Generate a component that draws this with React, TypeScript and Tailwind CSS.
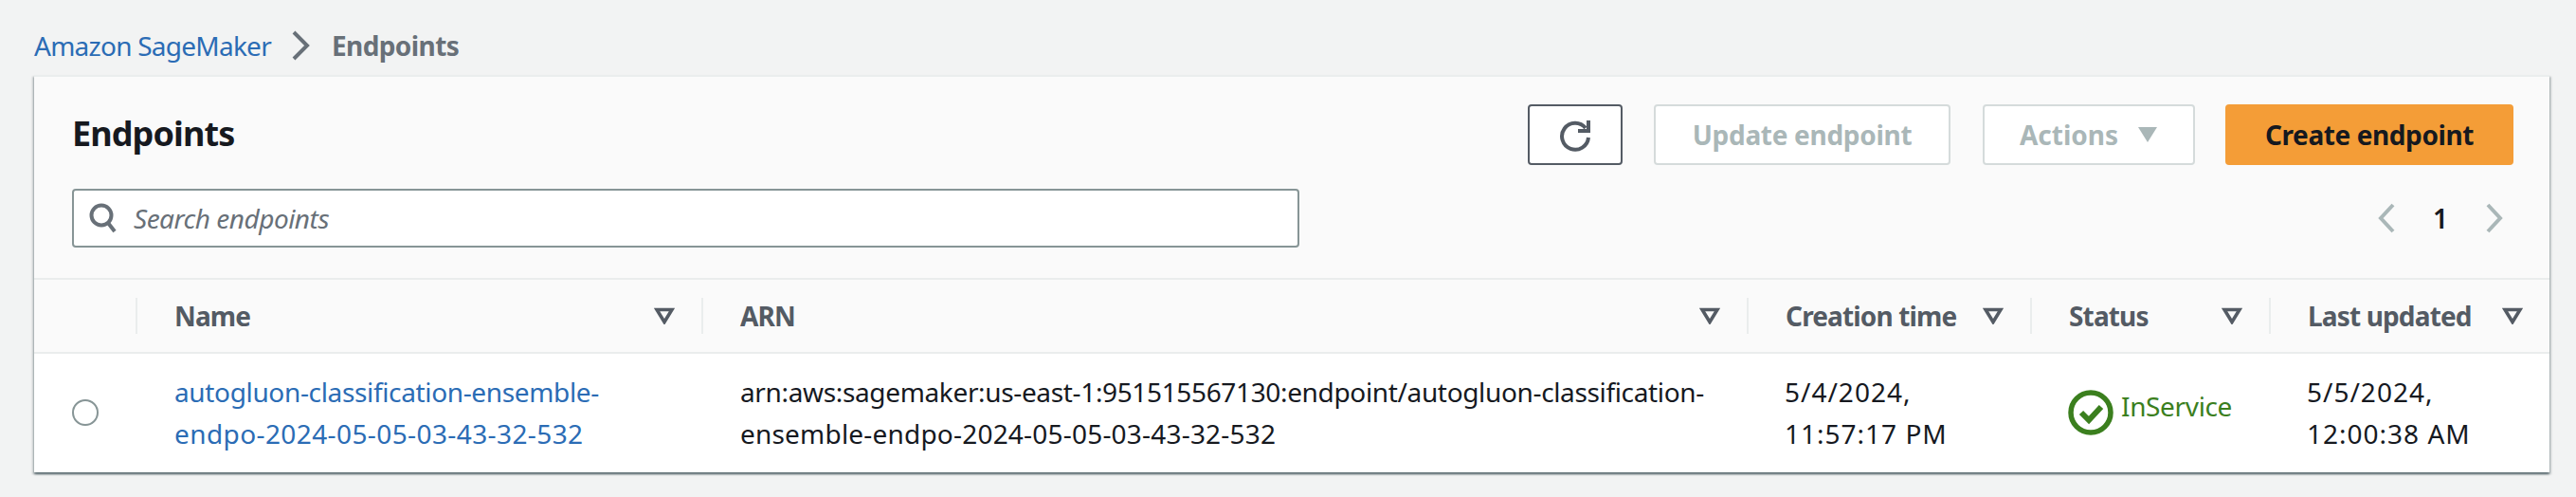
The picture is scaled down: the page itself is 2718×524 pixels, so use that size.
function SortIcon() {
  return (
    <svg width="22" height="18" viewBox="0 0 22 18" className="shrink-0">
      <path d="M3 2.5h16L11 15.5z" fill="none" stroke="#545b64" strokeWidth="3.6" strokeLinejoin="miter" />
    </svg>
  );
}
function Th({ label }: { label: string }) {
  return (
    <div className="flex h-[38px] items-center justify-between border-l-2 border-[#eaeded] pl-[39px] pr-[28px]">
      <span className="text-[28px] font-bold tracking-[-0.85px] text-[#545b64] whitespace-nowrap">{label}</span>
      <SortIcon />
    </div>
  );
}
export default function App() {
  return (
    <div className="h-[524px] w-[2718px] overflow-hidden bg-[#f2f3f3] font-['Noto_Sans','Open_Sans',sans-serif] text-[28px] leading-[44px] text-[#16191f]">
      <div className="flex h-[79px] items-center pl-[36px] pt-[17px]">
        <span className="tracking-[-0.75px] text-[#2b6cb5]">Amazon SageMaker</span>
        <svg width="22" height="32" viewBox="0 0 22 32" className="ml-[21px] mr-[21px]">
          <path d="M3 2l14 14L3 30" fill="none" stroke="#687078" strokeWidth="4" />
        </svg>
        <span className="font-bold tracking-[-0.6px] text-[#687078]">Endpoints</span>
      </div>
      <div className="ml-[36px] h-[419px] w-[2654px] border-t-2 border-[#eaeded] bg-white shadow-[0_2px_2px_rgba(0,28,36,0.5),2px_2px_2px_rgba(0,28,36,0.15),-2px_2px_2px_rgba(0,28,36,0.15)]">
        <div className="h-[214px] border-b-2 border-[#eaeded] bg-[#fafafa] pl-[40px] pr-[38px]">
          <div className="flex h-[93px] items-end">
            <h1 className="mb-[8px] text-[36px] font-bold leading-[50px] tracking-[-0.9px] text-[#16191f]">Endpoints</h1>
            <div className="ml-auto flex items-center">
              <button className="flex h-[64px] w-[100px] items-center justify-center rounded-[4px] border-2 border-[#545b64] bg-white">
                <svg width="34" height="36" viewBox="0 0 34 36">
                  <path d="M28 11A14 14 0 1 0 31 21" fill="none" stroke="#545b64" strokeWidth="4" />
                  <path d="M31 3v11H20" fill="none" stroke="#545b64" strokeWidth="4" />
                </svg>
              </button>
              <button className="ml-[33px] flex h-[64px] w-[313px] items-center justify-center rounded-[4px] border-2 border-[#d5dbdb] bg-white font-bold tracking-[-0.3px] text-[#aab7b8]">Update endpoint</button>
              <button className="ml-[34px] flex h-[64px] w-[224px] items-center justify-center gap-[20px] rounded-[4px] border-2 border-[#d5dbdb] bg-white font-bold text-[#aab7b8]">
                Actions
                <svg width="22" height="18" viewBox="0 0 22 18"><path d="M1 1h20L11 17z" fill="#aab7b8" /></svg>
              </button>
              <button className="ml-[32px] flex h-[64px] w-[304px] items-center justify-center rounded-[4px] bg-[#f49d37] font-bold tracking-[-0.4px] text-[#16191f]">Create endpoint</button>
            </div>
          </div>
          <div className="mt-[25px] flex items-center">
            <div className="flex h-[62px] w-[1295px] items-center rounded-[4px] border-2 border-[#879596] bg-white pl-[16px]">
              <svg width="30" height="32" viewBox="0 0 30 32" className="shrink-0">
                <circle cx="13" cy="13" r="10.5" fill="none" stroke="#687078" strokeWidth="4" />
                <path d="M20 21l7 9" fill="none" stroke="#687078" strokeWidth="4" />
              </svg>
              <span className="ml-[17px] italic tracking-[-0.5px] text-[#687078]">Search endpoints</span>
            </div>
            <div className="ml-auto mr-[10px] flex items-center">
              <svg width="20" height="32" viewBox="0 0 20 32"><path d="M17 2L4 16l13 14" fill="none" stroke="#aab7b8" strokeWidth="4" /></svg>
              <span className="mx-[39px] font-semibold leading-[44px]">1</span>
              <svg width="20" height="32" viewBox="0 0 20 32"><path d="M3 2l13 14L3 30" fill="none" stroke="#aab7b8" strokeWidth="4" /></svg>
            </div>
          </div>
        </div>
        <div className="grid h-[78px] grid-cols-[107px_597px_1103px_299px_252px_1fr] items-center border-b-2 border-[#eaeded] bg-[#fafafa]">
          <div />
          <Th label="Name" />
          <Th label="ARN" />
          <Th label="Creation time" />
          <Th label="Status" />
          <Th label="Last updated" />
        </div>
        <div className="grid h-[123px] grid-cols-[107px_597px_1103px_299px_252px_1fr] items-center">
          <div className="flex justify-center">
            <span className="ml-[1px] h-[28px] w-[28px] rounded-full border-2 border-[#879596] bg-white" />
          </div>
          <div className="pl-[41px] pr-[40px] text-[#2b6cb5]">
            <div className="tracking-[-0.35px]">autogluon-classification-ensemble-</div>
            <div className="tracking-[0.4px]">endpo-2024-05-05-03-43-32-532</div>
          </div>
          <div className="pl-[41px] pr-[30px]">
            <div className="whitespace-nowrap tracking-[-0.35px]">arn:aws:sagemaker:us-east-1:951515567130:endpoint/autogluon-classification-</div>
            <div className="tracking-[0.2px]">ensemble-endpo-2024-05-05-03-43-32-532</div>
          </div>
          <div className="pl-[40px] pr-[40px] tracking-[1px]">5/4/2024,<br />11:57:17 PM</div>
          <div className="flex items-start pl-[40px]">
            <svg width="48" height="48" viewBox="0 0 48 48" className="shrink-0">
              <circle cx="24" cy="24" r="21" fill="none" stroke="#3b7f1e" strokeWidth="5.5" />
              <path d="M14 24l8 8 13-14" fill="none" stroke="#3b7f1e" strokeWidth="6" />
            </svg>
            <span className="ml-[8px] leading-[34px] tracking-[-0.35px] text-[#3b7f1e]">InService</span>
          </div>
          <div className="pl-[40px] tracking-[1px]">5/5/2024,<br />12:00:38 AM</div>
        </div>
      </div>
    </div>
  );
}
